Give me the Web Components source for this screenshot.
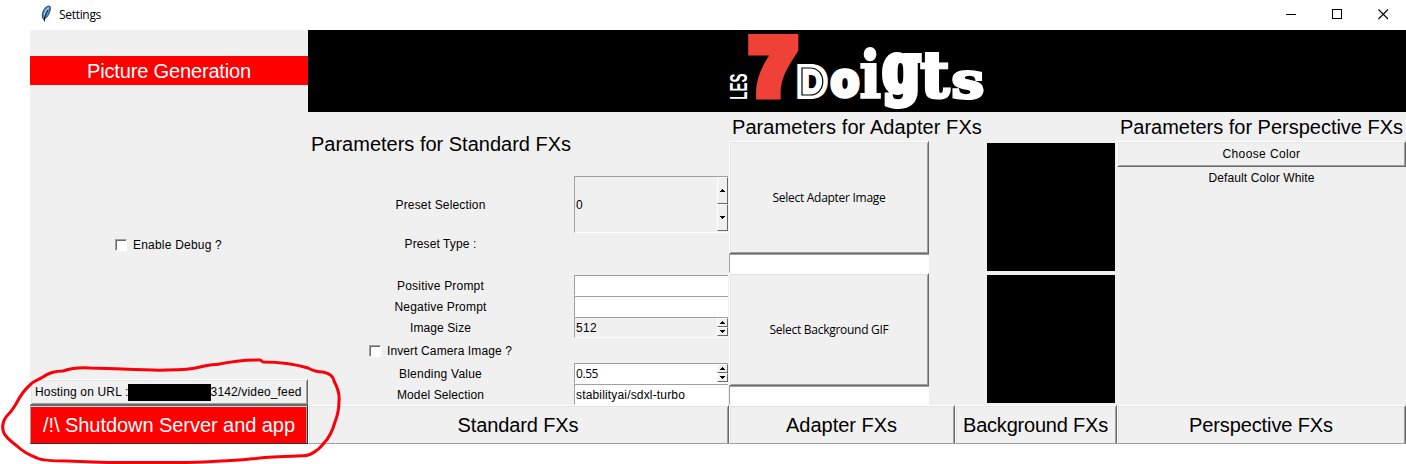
<!DOCTYPE html>
<html lang="en">
<head>
<meta charset="utf-8">
<title>Settings</title>
<style>
html,body{margin:0;background:#fff;overflow:hidden}
body{width:1406px;height:464px;font:12px/16px "Liberation Sans",Arial,sans-serif;color:#000}
</style>
</head>
<body>
<settings-window></settings-window>
<script>
const define = (name, html, setup) => customElements.define(name, class extends HTMLElement {
  connectedCallback() {
    if (this.shadowRoot) return;
    const t = document.createElement('template');
    t.innerHTML = html;
    this.attachShadow({mode: 'open'}).append(t.content.cloneNode(true));
    if (setup) setup(this, this.shadowRoot);
  }
});

/* Text run tracked to a given width */
define('tk-text', `<style>
:host{display:inline-block;white-space:pre;flex:none}
:host([big]){font-size:20px;line-height:24px}
:host([ui]){font-family:"Open Sans","Noto Sans",sans-serif}
</style><slot></slot>`, el => {
  const w = +el.getAttribute('w');
  if (!w) return;
  const n = el.textContent.length;
  const cs = getComputedStyle(el), c = document.createElement('canvas').getContext('2d');
  c.font = cs.fontSize + ' ' + cs.fontFamily;
  const gap = (w - c.measureText(el.textContent).width) / n;
  el.style.letterSpacing = gap.toFixed(3) + 'px';
});

define('tk-button', `<style>
:host{display:flex;align-items:center;justify-content:center;box-sizing:border-box;background:#f0f0f0;
border:1px solid;border-color:#fff #696969 #696969 #fff;box-shadow:inset 1px 1px #e3e3e3,inset -1px -1px #a0a0a0}
:host([flat]){border-bottom-color:#a0a0a0;box-shadow:inset 1px 1px #e3e3e3,inset -1px 0 #a0a0a0}
:host([danger]){background:#f00;color:#fff;border-color:#696969 #303030 #303030 #a0a0a0;box-shadow:inset 0 1px #e3e3e3,inset -1px 0 #a0a0a0}
</style><slot></slot>`);

define('tk-entry', `<style>
:host{display:flex;align-items:center;box-sizing:border-box;background:#fff;border:1px solid;border-color:#a0a0a0 #fff #fff #a0a0a0;border-right:0;padding-left:1px}
</style><slot></slot>`);

define('tk-spin', `<style>
:host{display:flex;box-sizing:border-box;background:#f0f0f0;border:1px solid;border-color:#a0a0a0 #fff #fff #a0a0a0;border-right:0}
:host([white]){background:#fff}
.v{flex:1;display:flex;align-items:center;padding-left:1px}
.b{width:11px;display:flex;flex-direction:column;padding-bottom:1px}
i{flex:1;display:flex;align-items:center;justify-content:center;background:#f0f0f0;box-sizing:border-box;border:1px solid;border-color:#fff #696969 #696969 #fff}
svg{display:block}
</style><div class="v"><slot></slot></div><div class="b">
<i><svg width="5" height="3"><path d="M2 0h1v1h1v1h1v1H0V2h1V1h1z" shape-rendering="crispEdges"/></svg></i>
<i><svg width="5" height="3"><path d="M0 0h5v1H4v1H3v1H2V2H1V1H0z" shape-rendering="crispEdges"/></svg></i></div>`);

define('tk-check', `<style>
:host{display:flex;align-items:center;gap:6px}
b{width:12px;height:12px;box-sizing:border-box;background:#fff;border:1px solid;border-color:#a0a0a0 #fff #fff #a0a0a0;box-shadow:inset 1px 1px #696969}
</style><b></b><slot></slot>`);

define('title-bar', `<style>
:host{display:flex;height:30px;align-items:center;padding:0 17px 0 39px;background:#fff}
.t{margin-left:6px;flex:1;padding-bottom:1px}
.f{margin-top:-3px}
.c{display:flex;gap:35px;margin-top:-2px}
svg{display:block}
</style>
<svg class="f" width="14" height="18" viewBox="0 0 14 18"><path d="M4.600 14.500C2.200 11 3.400 6.600 6 3.200 7.500 1.500 9.800.7 11 1.400c.9 2-.1 5.500-1.400 8-1.100 2-2.600 3.600-4.200 4.500z" fill="#4a8fd6" stroke="#2a3340" stroke-width="1"/><path d="M9.700 2.500C7 5 5.800 8 5.300 10" fill="none" stroke="#a9cdf0" stroke-width="1.200"/><path d="M8.800 5C6.500 9 5.600 12 5.300 16.500" fill="none" stroke="#111" stroke-width="1"/></svg>
<div class="t"><tk-text ui w="42">Settings</tk-text></div>
<div class="c">
<svg width="11" height="11"><path d="M0 5.500h10" stroke="#000"/></svg>
<svg width="11" height="11"><path d="M.5 .5h9v9h-9z" fill="none" stroke="#000" shape-rendering="crispEdges"/></svg>
<svg width="11" height="11"><path d="M.5.5l9.500 9.500M10 .5L.5 10" stroke="#000" stroke-width="1.100"/></svg>
</div>`);

/* Banner: each letter is live text scaled to its own ink box [x0,y0,x1,y1] */
define('brand-banner', `<style>
:host{display:block;background:#000;height:82px}
svg{display:block;margin-left:421px;overflow:visible}
</style><svg width="260" height="82"></svg>`, (el, root) => {
  const svg = root.querySelector('svg'), NS = 'http://www.w3.org/2000/svg';
  const ctx = document.createElement('canvas').getContext('2d');
  const serif = '"DejaVu Serif"', sans = '"Liberation Sans"';
  const add = (ch, font, [x0, y0, x1, y1], fill, sw, rot) => {
    ctx.font = 'bold 100px ' + font;
    const m = ctx.measureText(ch), l = -m.actualBoundingBoxLeft, r = m.actualBoundingBoxRight,
      t = -m.actualBoundingBoxAscent, b = m.actualBoundingBoxDescent, h = sw / 2;
    let W = x1 - x0, H = y1 - y0, pre = `translate(${x0} ${y0})`;
    if (rot) { [W, H] = [H, W]; pre = `translate(${x0} ${y1}) rotate(-90)`; }
    const e = document.createElementNS(NS, 'text');
    e.textContent = ch;
    e.setAttribute('transform', `${pre} scale(${W / (r - l + sw)} ${H / (b - t + sw)}) translate(${h - l} ${h - t})`);
    e.setAttribute('style', `font:bold 100px ${font};fill:${fill};stroke:${fill};stroke-width:${sw}px`);
    svg.append(e);
  };
  add('LES', sans, [1, 44, 18, 69], '#fff', 0, true);
  add('7', sans, [19, 3, 70, 69], '#ef4136', 17);
  add('D', sans, [68, 34, 99, 69], '#fff', 14);
  add('o', sans, [101, 39, 131, 69.5], '#fff', 12);
  add('i', serif, [131, 18, 152, 69], '#fff', 3);
  add('g', serif, [153, 23, 193, 79], '#fff', 9);
  add('t', serif, [191, 22, 222, 69.5], '#fff', 5);
  add('s', serif, [223, 39, 255, 69.5], '#fff', 6);
  const line = document.createElementNS(NS, 'path');
  line.setAttribute('d', 'M73 38H81C98 38 98 65 81 65H73Z');
  line.setAttribute('style', 'fill:none;stroke:#000;stroke-width:1.2px');
  svg.append(line);
});

define('server-panel', `<style>
:host{display:grid;grid-template-rows:26px 29px 294px 26px 39px;background:#f0f0f0}
.h{grid-row:2;background:#f00;color:#fff;display:flex;align-items:center;justify-content:center}
.d{grid-row:3;padding:152px 0 0 85px}
.u{grid-row:4;justify-content:flex-start;padding-left:4px}
.s{grid-row:5}
.m{width:83px;height:17px;background:#000;margin-left:-1px}
</style>
<div class="h"><tk-text big w="164">Picture Generation</tk-text></div>
<div class="d"><tk-check><tk-text w="89">Enable Debug ?</tk-text></tk-check></div>
<tk-button class="u"><tk-text w="94">Hosting on URL :</tk-text><span class="m"></span><tk-text w="91">3142/video_feed</tk-text></tk-button>
<tk-button class="s" danger><tk-text big w="252">/!\\ Shutdown Server and app</tk-text></tk-button>`);

define('standard-panel', `<style>
:host{display:grid;grid-template:64px 57px 42px 21px 21px 21px 25px 21px 21px / 266px 154px 1px;background:#f0f0f0}
:host>*{min-width:0}
.h{grid-column:1/4;display:flex;align-items:center;padding-left:3px}
.l{grid-column:1;display:flex;align-items:center;justify-content:center;padding-right:1px}
.p{align-items:flex-start;padding-top:3px}
.f{grid-column:2}
</style>
<div class="h"><tk-text big w="260">Parameters for Standard FXs</tk-text></div>
<div class="l"><tk-text w="90">Preset Selection</tk-text></div><tk-spin class="f">0</tk-spin>
<div class="l p"><tk-text w="72">Preset Type :</tk-text></div>
<div class="l"><tk-text w="87">Positive Prompt</tk-text></div><tk-entry class="f"></tk-entry>
<div class="l"><tk-text w="92">Negative Prompt</tk-text></div><tk-entry class="f"></tk-entry>
<div class="l"><tk-text w="61">Image Size</tk-text></div><tk-spin class="f"><tk-text w="21">512</tk-text></tk-spin>
<div class="l"><tk-check><tk-text w="125">Invert Camera Image ?</tk-text></tk-check></div>
<div class="l"><tk-text w="83">Blending Value</tk-text></div><tk-spin class="f" white><tk-text ui w="22">0.55</tk-text></tk-spin>
<div class="l"><tk-text w="87">Model Selection</tk-text></div><tk-entry class="f"><tk-text w="109">stabilityai/sdxl-turbo</tk-text></tk-entry>`);

define('adapter-panel', `<style>
:host{display:grid;grid-template:29px 113px 19px 113px 19px / 200px 188px;background:#f0f0f0}
.h{grid-column:1/3;padding:3px 0 0 3px}
.c{grid-column:1}
.i{grid-area:2/2/6/3;display:flex;flex-direction:column;align-items:flex-end;gap:4px;padding:2px 2px 0 0}
.i span{width:128px;height:128px;background:#000}
</style>
<div class="h"><tk-text big w="251">Parameters for Adapter FXs</tk-text></div>
<tk-button class="c"><tk-text ui w="113">Select Adapter Image</tk-text></tk-button>
<tk-entry class="c"></tk-entry>
<tk-button class="c"><tk-text ui w="119">Select Background GIF</tk-text></tk-button>
<tk-entry class="c"></tk-entry>
<div class="i"><span></span><span></span></div>`);

define('perspective-panel', `<style>
:host{display:grid;grid-template-rows:29px 26px 22px 1fr;background:#f0f0f0}
.h{padding:3px 0 0 3px}
.l{display:flex;align-items:center;justify-content:center}
</style>
<div class="h"><tk-text big w="283">Parameters for Perspective FXs</tk-text></div>
<tk-button><tk-text w="78">Choose Color</tk-text></tk-button>
<div class="l"><tk-text w="106">Default Color White</tk-text></div>`);

define('pen-mark', `<style>:host{display:block;pointer-events:none}svg{display:block}</style>
<svg width="350" height="114" viewBox="0 350 350 114"><path d="M30 385C33 381 38 380 43 377Q51 371 63 371Q75 367 90 368C110 368 150 371 167 370Q190 370 200 367Q211 364 217 364.500Q238 360 258 360Q260 359 263 362C280 362 298 365 308 368Q315 372 323 372Q333 374 334 381Q340 392 339 401Q339 412 335 422Q331 436 324 443Q319 449 317 450Q310 456 303 455.700L273 457C255 458 240 461 221 461Q190 463 167 462.500H107L67 461Q43 461 37 458Q24 453 17 446Q5 437 3.500 432Q1 424 6 417Q12 411 16 404Q22 392 30 385Z" fill="none" stroke="#fa0008" stroke-width="3" stroke-linejoin="round"/></svg>`);

define('settings-window', `<style>
:host{display:block;position:relative;width:1406px;height:464px;background:#fff}
main{display:grid;grid-template:82px 293px 39px / 278px 421px 388px 289px;margin-left:30px}
server-panel{grid-area:1/1/4/2}
brand-banner{grid-area:1/2/2/5}
nav{grid-area:3/2/4/5;display:grid;grid-template-columns:421px 226px 162px 289px}
nav tk-button{padding-right:1px}
pen-mark{position:absolute;left:0;top:350px}
</style>
<title-bar></title-bar>
<main>
<server-panel></server-panel><brand-banner></brand-banner>
<standard-panel></standard-panel><adapter-panel></adapter-panel><perspective-panel></perspective-panel>
<nav>
<tk-button flat><tk-text big w="121">Standard FXs</tk-text></tk-button>
<tk-button flat><tk-text big w="111">Adapter FXs</tk-text></tk-button>
<tk-button flat><tk-text big w="145">Background FXs</tk-text></tk-button>
<tk-button flat><tk-text big w="144">Perspective FXs</tk-text></tk-button>
</nav>
</main>
<pen-mark></pen-mark>`);
</script>
</body>
</html>
